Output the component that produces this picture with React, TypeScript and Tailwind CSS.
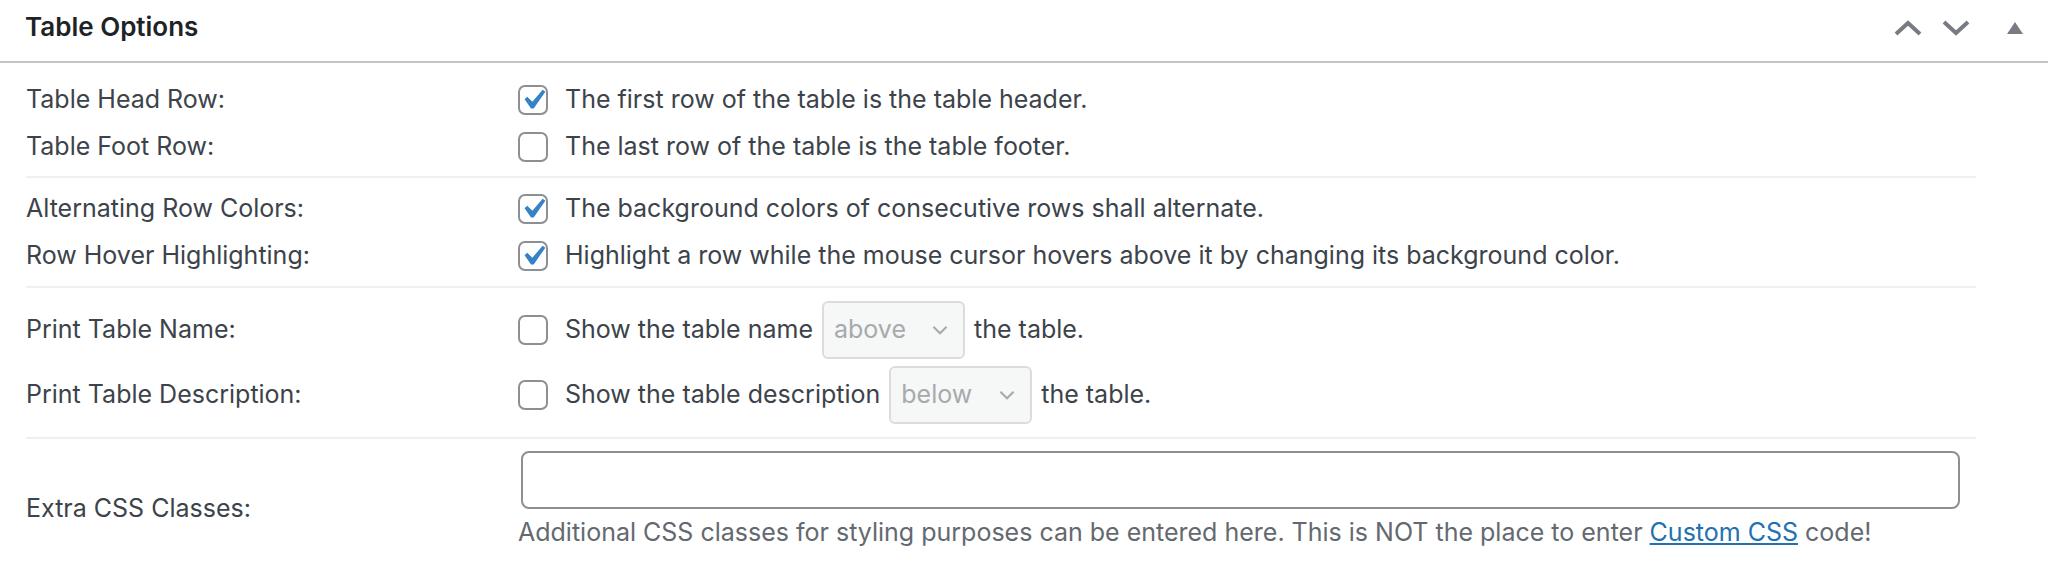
import React from 'react';

const font = { fontFamily: 'Inter, "Noto Sans", sans-serif' };

function Checkbox({ checked }: { checked: boolean }) {
  return (
    <span className="relative inline-block w-[30px] h-[30px] shrink-0 rounded-[7px] border-2 border-[#8c8f94] bg-white">
      {checked && (
        <svg
          viewBox="0 0 20 20"
          className="absolute left-[-7px] top-[-7px] w-[40px] h-[40px]"
        >
          <path d="M14.83 4.89l1.34.94-5.81 8.38H9.02L5.78 9.67l1.34-1.25 2.57 2.4z" fill="#3582c4" />
        </svg>
      )}
    </span>
  );
}

function Select({ value, width }: { value: string; width: string }) {
  return (
    <span
      className={`inline-flex items-center justify-between h-[58px] ${width} pl-[10px] pr-[12px] rounded-[6px] border-2 border-[#dcdcde] bg-[#f6f7f7] text-[#a7aaad]`}
    >
      <span>{value}</span>
      <svg viewBox="0 0 20 20" className="w-[22px] h-[22px]">
        <path d="M4 7l6 6 6-6" fill="none" stroke="#a7aaad" strokeWidth="1.8" />
      </svg>
    </span>
  );
}

function CheckRow({ label, checked, children }: { label: string; checked: boolean; children: React.ReactNode }) {
  return (
    <div className="grid grid-cols-[492px_1fr] items-center h-[47px]">
      <div>{label}</div>
      <div className="flex items-center gap-[17px]">
        <Checkbox checked={checked} />
        <div>{children}</div>
      </div>
    </div>
  );
}

function SelectRow({ label, text, value, width }: { label: string; text: string; value: string; width: string }) {
  return (
    <div className="grid grid-cols-[492px_1fr] items-center h-[65px]">
      <div>{label}</div>
      <div className="flex items-center gap-[17px]">
        <Checkbox checked={false} />
        <div className="flex items-center gap-[9px]">
          <span>{text}</span>
          <Select value={value} width={width} />
          <span>the table.</span>
        </div>
      </div>
    </div>
  );
}

export default function App() {
  return (
    <div className="w-[2048px] h-[585px] overflow-hidden bg-white text-[25px] text-[#3c434a]" style={font}>
      {/* Header */}
      <div className="h-[63px] border-b-2 border-[#c3c4c7] flex items-center justify-between pl-[25px]">
        <h2 className="text-[26px] font-semibold text-[#1d2327] leading-none mb-[8px]">Table Options</h2>
        <div className="flex items-center h-full mb-[6px]">
          <button className="w-[48px] h-full flex items-center justify-center">
            <svg viewBox="0 0 28 16" className="w-[28px] h-[16px]">
              <path d="M2 14L14 3l12 11" fill="none" stroke="#787c82" strokeWidth="4" />
            </svg>
          </button>
          <button className="w-[48px] h-full flex items-center justify-center mr-[2px]">
            <svg viewBox="0 0 28 16" className="w-[28px] h-[16px]">
              <path d="M2 2l12 11L26 2" fill="none" stroke="#787c82" strokeWidth="4" />
            </svg>
          </button>
          <button className="w-[66px] h-full flex items-center justify-center">
            <svg viewBox="0 0 16 12" className="w-[16px] h-[12px]">
              <path d="M8 0l8 12H0z" fill="#787c82" />
            </svg>
          </button>
        </div>
      </div>

      <div className="ml-[26px] w-[1950px]">
        {/* Head / foot rows */}
        <div className="pt-[13px] pb-[6px] border-b-2 border-[#f0f0f1]">
          <CheckRow label="Table Head Row:" checked>
            The first row of the table is the table header.
          </CheckRow>
          <CheckRow label="Table Foot Row:" checked={false}>
            The last row of the table is the table footer.
          </CheckRow>
        </div>

        {/* Row styling */}
        <div className="pt-[7px] pb-[7px] border-b-2 border-[#f0f0f1]">
          <CheckRow label="Alternating Row Colors:" checked>
            The background colors of consecutive rows shall alternate.
          </CheckRow>
          <CheckRow label="Row Hover Highlighting:" checked>
            Highlight a row while the mouse cursor hovers above it by changing its background color.
          </CheckRow>
        </div>

        {/* Name / description */}
        <div className="pt-[9px] pb-[10px] border-b-2 border-[#f0f0f1]">
          <SelectRow label="Print Table Name:" text="Show the table name" value="above" width="w-[143px]" />
          <SelectRow label="Print Table Description:" text="Show the table description" value="below" width="w-[143px]" />
        </div>

        {/* Extra CSS classes */}
        <div className="grid grid-cols-[492px_1fr] items-center pt-[12px] pb-[22px]">
          <div className="pt-[16px]">Extra CSS Classes:</div>
          <div>
            <input
              type="text"
              className="block ml-[3px] w-[1439px] h-[58px] rounded-[8px] border-2 border-[#8c8f94] bg-white outline-none"
            />
            <p className="mt-[6px] h-[36px] flex items-center text-[#646970]">
              <span>
                Additional CSS classes for styling purposes can be entered here. This is NOT the place to enter{' '}
                <a href="#" className="text-[#2271b1] underline">Custom CSS</a> code!
              </span>
            </p>
          </div>
        </div>
      </div>
    </div>
  );
}
